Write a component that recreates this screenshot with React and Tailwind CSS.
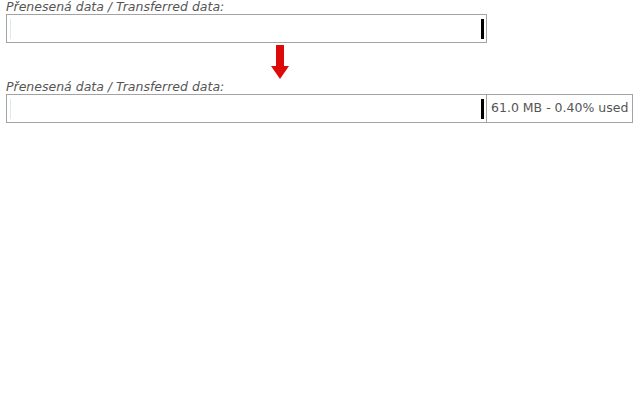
import React from "react";

function Label() {
  return (
    <div className="h-[14px] text-[12.5px] leading-[14px] italic text-[#555] font-['DejaVu_Sans',sans-serif]">
      Přenesená data / Transferred data:
    </div>
  );
}

function Meter({ children }) {
  return (
    <div className="flex w-[481px] h-[29px] border border-[#a3a3a3] bg-white">
      <div className="flex-1 flex items-center pl-[3px]">
        <div className="w-[1px] h-[20px] bg-[#d6ece6]" />
      </div>
      <div className="flex items-center pr-[2px]">
        <div className="w-[3px] h-[20px] bg-black" />
      </div>
      {children}
    </div>
  );
}

export default function App() {
  return (
    <div className="min-h-[400px] bg-white pl-[6px] font-['DejaVu_Sans',sans-serif]">
      <Label />
      <Meter />
      <div className="w-[481px] h-[37px] flex justify-center items-start pt-[2px]">
        <svg width="18" height="34" viewBox="0 0 18 34" className="ml-[66px]">
          <rect x="5" y="0" width="8" height="22" fill="#dd0a0a" />
          <polygon points="0,21 18,21 9,34" fill="#dd0a0a" />
        </svg>
      </div>
      <Label />
      <div className="flex">
        <Meter />
        <div className="h-[29px] w-[147px] -ml-[1px] border border-[#a3a3a3] flex items-center pl-[4px] text-[12.5px] text-[#555]">
          61.0 MB - 0.40% used
        </div>
      </div>
    </div>
  );
}
